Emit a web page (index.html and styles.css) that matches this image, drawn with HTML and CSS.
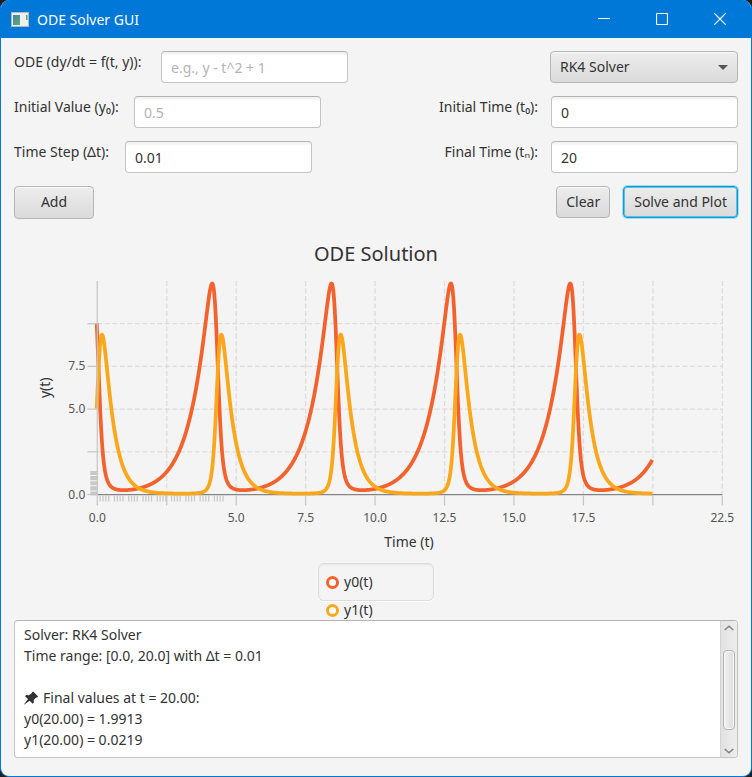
FILE: index.html
```html
<!DOCTYPE html>
<html lang="en">
<head>
<meta charset="utf-8">
<title>ODE Solver GUI</title>
<link rel="stylesheet" href="styles.css">
</head>
<body>
<div class="window">
  <header class="titlebar">
    <svg class="app-icon" width="18" height="15" viewBox="0 0 18 15" aria-hidden="true">
      <defs>
        <linearGradient id="pane" x1="0" y1="0" x2="1" y2="1">
          <stop offset="0" stop-color="#4f7fa6"/><stop offset="1" stop-color="#5fb06a"/>
        </linearGradient>
      </defs>
      <rect x="0.5" y="0.5" width="17" height="14" fill="#eef0f0" stroke="#b4b9bd"/>
      <rect x="2" y="3" width="7" height="10" fill="url(#pane)"/>
      <rect x="15" y="3" width="1.5" height="5" fill="#5a9f80"/>
    </svg>
    <h1 class="titlebar-text">ODE Solver GUI</h1>
    <button class="caption-button" type="button" aria-label="Minimize">
      <svg width="12" height="12" viewBox="0 0 12 12"><path d="M0 5.5H12"/></svg>
    </button>
    <button class="caption-button" type="button" aria-label="Maximize">
      <svg width="12" height="12" viewBox="0 0 12 12"><rect x="0.5" y="0.5" width="11" height="11" rx="1"/></svg>
    </button>
    <button class="caption-button" type="button" aria-label="Close">
      <svg width="12" height="12" viewBox="0 0 12 12"><path d="M0.3 0.3L11.7 11.7M11.7 0.3L0.3 11.7"/></svg>
    </button>
  </header>

  <main class="content">
    <form class="form" onsubmit="return false">
      <div class="row">
        <div class="field">
          <label class="label-wide" for="ode">ODE (dy/dt = f(t, y)):</label>
          <input id="ode" class="text-field" type="text" placeholder="e.g., y - t^2 + 1">
        </div>
        <div class="combo">
          <select id="solver" class="combo-box" aria-label="Solver"><option>RK4 Solver</option></select>
        </div>
      </div>
      <div class="row">
        <div class="field">
          <label class="label-medium" for="y0">Initial Value (y₀):</label>
          <input id="y0" class="text-field" type="text" placeholder="0.5">
        </div>
        <div class="field">
          <label for="t0">Initial Time (t₀):</label>
          <input id="t0" class="text-field" type="text" value="0">
        </div>
      </div>
      <div class="row">
        <div class="field">
          <label class="label-narrow" for="dt">Time Step (Δt):</label>
          <input id="dt" class="text-field" type="text" value="0.01">
        </div>
        <div class="field">
          <label for="tn">Final Time (tₙ):</label>
          <input id="tn" class="text-field" type="text" value="20">
        </div>
      </div>
      <div class="row">
        <button class="button button-add" type="button">Add</button>
        <div class="actions">
          <button class="button" type="button">Clear</button>
          <button class="button button-focused" type="button">Solve and Plot</button>
        </div>
      </div>
    </form>

    <section class="chart">
      <h2 class="chart-title">ODE Solution</h2>
      <div class="plot"><svg id="plot" role="img" aria-label="ODE Solution"></svg></div>
      <p class="axis-title">Time (t)</p>
      <div class="legend">
        <ul class="legend-box">
          <li class="legend-item"><span class="symbol symbol-y0"></span><span class="legend-label">y0(t)</span></li>
          <li class="legend-item"><span class="symbol symbol-y1"></span><span class="legend-label">y1(t)</span></li>
        </ul>
      </div>
    </section>

    <div class="log">
      <div class="log-body">
        <textarea class="log-text" readonly aria-label="Results">Solver: RK4 Solver
Time range: [0.0, 20.0] with Δt = 0.01

&#8195;&#8202; Final values at t = 20.00:
y0(20.00) = 1.9913
y1(20.00) = 0.0219</textarea>
        <svg class="pin" width="15" height="14" viewBox="0 0 15 14" aria-hidden="true">
          <path d="M9.2 0.6L14.2 5.4L13.2 6.6L12.2 6.4L9.7 9.1L9.9 11.6L8.7 12.7L5.6 9.7L0.3 13.4L0.1 13.2L4 8.1L1 5.2L2.2 4L4.8 4.2L8 1.9L8 1.3Z"/>
        </svg>
      </div>
      <div class="scrollbar">
        <button class="scroll-button" type="button" aria-label="Scroll up">
          <svg width="10" height="6" viewBox="0 0 10 6"><path d="M0.7 5L5 1.2L9.3 5"/></svg>
        </button>
        <div class="track"><div class="thumb"></div></div>
        <button class="scroll-button" type="button" aria-label="Scroll down">
          <svg width="10" height="6" viewBox="0 0 10 6"><path d="M0.7 1L5 4.8L9.3 1"/></svg>
        </button>
      </div>
    </div>
  </main>
</div>
<script src="chart.js"></script>
</body>
</html>
```
FILE: styles.css
```css
* { box-sizing: border-box; }

html, body { height: 100%; }

body {
  margin: 0;
  background: #1d1f23;
  color: #333;
  font: 14px/21px "Noto Sans", "Open Sans", sans-serif;
}

button, input, select, textarea { font: inherit; color: inherit; }

.window {
  display: flex;
  flex-direction: column;
  height: 100%;
  border: 1px solid #0078d7;
  border-top: 0;
  border-radius: 9px;
  background: #f4f4f4;
  overflow: hidden;
}

.titlebar {
  display: flex;
  align-items: center;
  height: 38px;
  flex: none;
  padding: 0 2px 0 10px;
  background: #0078d7;
  color: #fff;
}

.titlebar-text {
  flex: 1;
  margin: 0 0 0 8px;
  font-size: 14px;
  font-weight: 400;
}

.caption-button {
  display: flex;
  align-items: center;
  justify-content: center;
  width: 58px;
  height: 38px;
  padding: 0;
  border: 0;
  background: none;
}

.caption-button svg { fill: none; stroke: #fff; stroke-width: 1.2; }

.content {
  display: flex;
  flex: 1;
  flex-direction: column;
  min-height: 0;
  padding: 13px 13px 18px;
}

.form { display: grid; gap: 13px; }

.row { display: flex; justify-content: space-between; align-items: flex-start; }

.field, .actions { display: flex; gap: 13px; align-items: flex-start; }

.label-wide { min-width: 134px; }
.label-medium { min-width: 107px; }
.label-narrow { min-width: 98px; }

.text-field {
  width: 187px;
  height: 32px;
  padding: 0 9px;
  border: 1px solid #c4c4c4;
  border-top-color: #b4b4b4;
  border-radius: 4px;
  background: #fff linear-gradient(#eee, #fff 4px);
  outline: 0;
}

.text-field::placeholder { color: #b4b4b4; opacity: 1; }

.combo { position: relative; }

.combo::after {
  content: "";
  position: absolute;
  top: 14px;
  right: 10px;
  border: 5px solid transparent;
  border-top-color: #555;
  border-bottom: 0;
  pointer-events: none;
}

.combo-box {
  appearance: none;
  width: 188px;
  height: 32px;
  padding: 0 9px 2px;
  border: 1px solid #b5b5b5;
  border-radius: 4px;
  background: linear-gradient(#ededed, #dadada);
  box-shadow: inset 0 1px #f8f8f8;
}

.button {
  height: 32px;
  padding: 0 9px 2px;
  border: 1px solid #b5b5b5;
  border-radius: 4px;
  background: linear-gradient(#ededed, #dadada);
  box-shadow: inset 0 1px #f8f8f8;
}

.button-add { width: 80px; height: 33px; }

.button-focused {
  padding: 0 10px 2px;
  border-color: #039ed3;
  box-shadow: inset 0 0 0 1px #5fc0e2, 0 0 0 1px #a9dcee;
}

.chart {
  display: flex;
  flex: 1;
  flex-direction: column;
  min-height: 0;
  margin-top: 20px;
}

.chart-title {
  margin: 0 0 6px;
  font-size: 20px;
  font-weight: 400;
  line-height: 30px;
  text-align: center;
}

.plot { flex: 1; min-height: 0; overflow: hidden; }

.plot svg { display: block; width: 100%; height: 100%; }

.axis-title { margin: 0 0 11px 66px; text-align: center; }

.grid { stroke: #dcdcdc; stroke-width: 1.25; stroke-dasharray: 5 2.5; }
.tick { stroke: #c6c6c6; stroke-width: 1.25; }
.minor { stroke: #c8c8c8; }
.zero { stroke: #858585; stroke-width: 1.25; }
.curve { fill: none; stroke-width: 3.75; stroke-linejoin: round; }
.curve-y0 { stroke: #f3622d; }
.curve-y1 { stroke: #fba71b; }
.tick-label { fill: #555; font-size: 12px; }
.y-title { fill: #333; font-size: 14px; text-anchor: middle; }

.legend { height: 57px; flex: none; overflow: hidden; }

.legend-box {
  width: 116px;
  height: 38px;
  margin: 0 auto;
  padding: 4px 7px 0;
  border: 1px solid #dedede;
  border-radius: 5px;
  background: #f4f4f4;
  box-shadow: inset 0 1px 2px #e4e4e4, 0 1px #fff;
  list-style: none;
}

.legend-item { display: flex; align-items: center; gap: 5px; height: 28px; }

.legend-label { padding-bottom: 2px; }

.symbol {
  width: 13px;
  height: 13px;
  border: 3px solid;
  border-radius: 50%;
  background: #fff;
}

.symbol-y0 { border-color: #f3622d; }
.symbol-y1 { border-color: #fba71b; }

.log {
  display: flex;
  flex: none;
  height: 138px;
  border: 1px solid #c4c4c4;
  border-top-color: #b4b4b4;
  border-radius: 4px;
  background: #fff;
  overflow: hidden;
}

.log-body { position: relative; display: flex; flex: 1; }

.log-text {
  flex: 1;
  padding: 3px 9px;
  border: 0;
  background: none;
  outline: 0;
  resize: none;
  overflow: hidden;
}

.pin { position: absolute; left: 9px; top: 70px; fill: #333; }

.scrollbar {
  display: flex;
  flex-direction: column;
  width: 17px;
  border-left: 1px solid #d4d4d4;
  background: linear-gradient(90deg, #e2e2e2, #ededed);
}

.scroll-button {
  display: flex;
  align-items: center;
  justify-content: center;
  height: 13px;
  padding: 0;
  border: 0;
  background: none;
}

.scroll-button svg { fill: none; stroke: #858585; stroke-width: 1.6; }

.track { flex: 1; padding: 16px 2px 14px; }

.thumb {
  height: 100%;
  border: 1px solid #b4b4b4;
  border-radius: 4px;
  background: linear-gradient(90deg, #f0f0f0, #dedede);
  box-shadow: inset 0 0 0 1px #f8f8f8;
}
```
FILE: chart.js
```js
const NS = "http://www.w3.org/2000/svg";
const svg = document.getElementById("plot");

// Predator-prey system integrated with classic RK4.
function derivative([x, y]) {
  return [1.5 * x - x * y, x * y - 3 * y];
}

function solve(start, step, end) {
  const points = [[0, ...start]];
  let s = start;
  const shift = (k, h) => s.map((v, i) => v + h * k[i]);
  for (let n = 1; n <= Math.round(end / step); n++) {
    const a = derivative(s);
    const b = derivative(shift(a, step / 2));
    const c = derivative(shift(b, step / 2));
    const d = derivative(shift(c, step));
    s = s.map((v, i) => v + step / 6 * (a[i] + 2 * b[i] + 2 * c[i] + d[i]));
    points.push([n * step, ...s]);
  }
  return points;
}

const solution = solve([10, 5], 0.01, 20);

function add(name, attrs, text) {
  const el = document.createElementNS(NS, name);
  for (const key in attrs) el.setAttribute(key, attrs[key]);
  if (text) el.textContent = text;
  svg.appendChild(el);
}

function line(cls, x1, y1, x2, y2) {
  add("line", { class: cls, x1, y1, x2, y2 });
}

function draw() {
  svg.textContent = "";
  const width = svg.clientWidth;
  const height = svg.clientHeight;
  const left = 83.3, right = width - 15.7, top = 6, bottom = height - 36.5;
  const px = t => left + (right - left) * t / 22.5;
  const py = v => bottom - (bottom - top) * v / 12.5;

  for (let t = 2.5; t <= 22.5; t += 2.5) line("grid", px(t), top, px(t), bottom);
  for (let v = 2.5; v <= 10; v += 2.5) line("grid", left, py(v), right, py(v));
  line("zero", left, bottom, right, bottom);

  for (let i = 1; i < 45; i++) {
    const x = left + i * 2.857;
    if (i % 5) line("tick minor", x, bottom + 1, x, bottom + 7);
  }
  add("line", { class: "minor", x1: left - 3.5, x2: left - 3.5, y1: bottom + 1, y2: bottom - 24,
    "stroke-width": 7, "stroke-dasharray": "4.1 1" });

  const inset = 0.6;
  [1, 2].forEach(i => {
    const d = solution.map((p, n) =>
      (n ? "L" : "M") + (px(p[0]) - inset).toFixed(2) + " " + (py(p[i]) - inset).toFixed(2)).join("");
    add("path", { class: "curve curve-y" + (i - 1), d });
  });

  line("tick", left, top, left, bottom);
  for (let t = 0; t <= 22.5; t += 2.5) line("tick", px(t), bottom + 1, px(t), bottom + 11);
  for (let v = 0; v <= 10; v += 2.5) line("tick", left - 10, py(v), left, py(v));

  [0, 5, 7.5, 10, 12.5, 15, 17.5, 22.5].forEach(t =>
    add("text", { class: "tick-label", x: px(t), y: bottom + 27, "text-anchor": "middle" }, t.toFixed(1)));
  [0, 5, 7.5].forEach(v =>
    add("text", { class: "tick-label", x: left - 12, y: py(v) + 4, "text-anchor": "end" }, v.toFixed(1)));

  const middle = (top + bottom) / 2;
  add("text", { class: "y-title", transform: `translate(36 ${middle}) rotate(-90)` }, "y(t)");
}

draw();
addEventListener("resize", draw);
```
